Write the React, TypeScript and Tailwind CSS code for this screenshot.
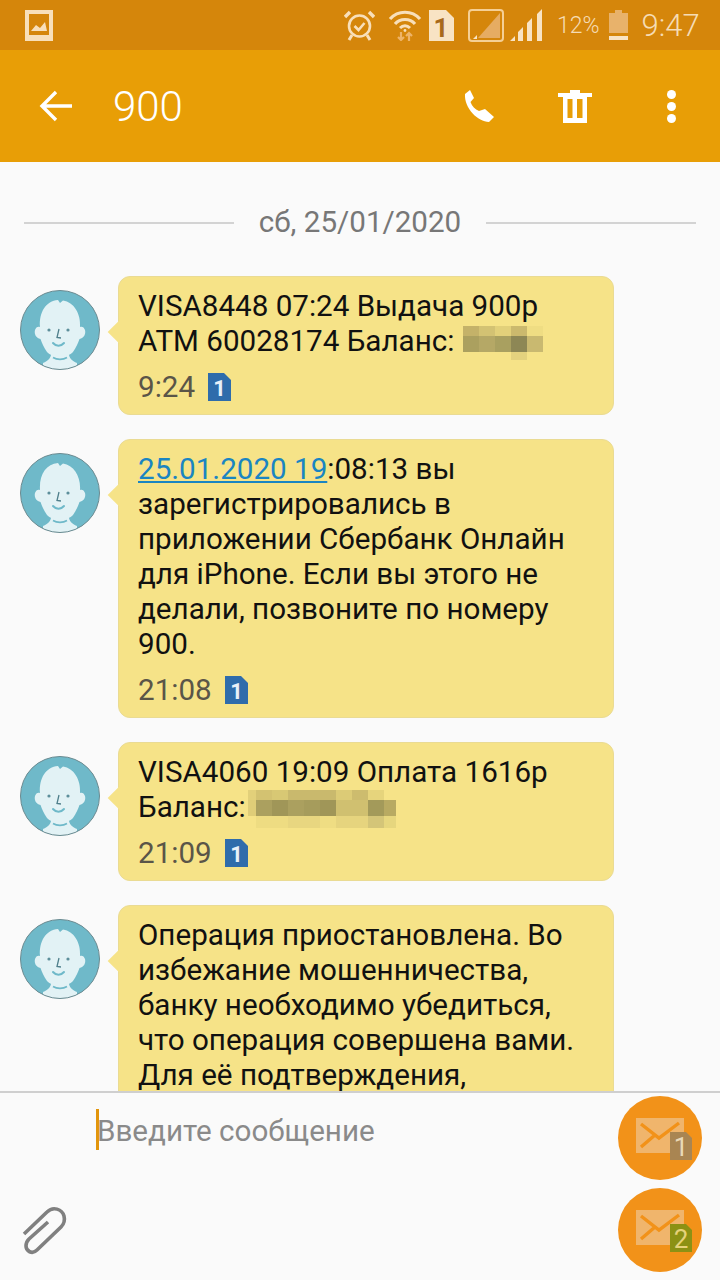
const firstCensor = {
  widths: [16, 16, 16, 16, 16],
  rows: [
    [10, ["#c4b269", "#d3c273", "#e2d07a", "#cbb96d", "#efdd83"]],
    [16, ["#aba05f", "#b5a866", "#a9a060", "#8d8755", "#c9b970"]],
    [8, ["", "", "", "#e4d27e", ""]],
  ],
} as const;

const secondCensor = {
  widths: [8, 16, 16, 16, 16, 16, 16, 16, 16, 12],
  rows: [
    [10, ["#e2d07a", "#d3c271", "#d8c874", "#c9b96d", "#c9b96d", "#c9b96d", "#dccb76", "#cdbc6e", "#e6d47c", ""]],
    [16, ["#dfcd78", "#aba05f", "#a09658", "#aba05f", "#a69c5c", "#a09658", "#d0c070", "#d0c070", "#a39a5a", "#b8aa62"]],
    [12, ["", "#eedc82", "#eedc82", "#e8d680", "#e8d680", "#efdd83", "#e6d47e", "#e6d47e", "#d4c578", "#e6d67e"]],
  ],
} as const;

function Censor({ data, top, left }: { data: typeof firstCensor | typeof secondCensor; top: number; left: number }) {
  return (
    <span className="relative inline-block h-0 w-0">
      <span className="absolute flex flex-col" style={{ top, left }}>
        {data.rows.map(([h, cells], i) => (
          <span key={i} className="flex">
            {cells.map((c, j) => (
              <span key={j} className="block shrink-0" style={{ width: data.widths[j], height: h, background: c || "transparent" }} />
            ))}
          </span>
        ))}
      </span>
    </span>
  );
}

function Avatar() {
  return (
    <svg width="80" height="80" viewBox="0 0 80 80" className="shrink-0">
      <defs>
        <clipPath id="circle">
          <circle cx="40" cy="40" r="39.5" />
        </clipPath>
      </defs>
      <circle cx="40" cy="40" r="39.5" fill="#6fb9c9" />
      <g clipPath="url(#circle)">
        <path d="M23 80 L23 73 C28 71 31 68 31 64 L49 64 C49 68 52 71 57 73 L57 80 Z" fill="#e2f2f5" />
        <path d="M27 62 C24 58 22 53 20.5 49 C16 48 14 44 15 40 C16 37 18 36 20 37 C19 22 26 11 38 10 L40 13 L43 10.5 C54 12 61 24 60 37 C62 36 64 37 65 40 C66 44 64 48 59.5 49 C58 53 56 58 53 62 C48 68 32 68 27 62 Z" fill="#e2f2f5" />
        <path d="M33 67.5 C37 70 43 70 47 67.5" stroke="#6fb9c9" strokeWidth="1.6" fill="none" />
        <path d="M33 53 C36 56.5 41 56.5 44 53" stroke="#6fb9c9" strokeWidth="2" fill="none" strokeLinecap="round" />
        <path d="M39 39 L37 47.5 L41 48" stroke="#4f7f8b" strokeWidth="1.3" fill="none" />
        <circle cx="29" cy="40" r="1.6" fill="#5d8f9b" />
        <circle cx="48" cy="40" r="1.6" fill="#5d8f9b" />
      </g>
      <circle cx="40" cy="40" r="39.5" fill="none" stroke="#6b8a90" strokeWidth="1" />
    </svg>
  );
}

function SimTag() {
  return (
    <svg width="24" height="28" viewBox="0 0 24 28" className="shrink-0">
      <path d="M1 0 H17 L24 7 V28 H1 Z" fill="#2f6cab" />
      <text x="12.5" y="23" textAnchor="middle" fontFamily="Roboto, sans-serif" fontWeight="700" fontSize="22" fill="#e8f0f8">1</text>
    </svg>
  );
}

function Message({ time, children }: { time?: string; children: React.ReactNode }) {
  return (
    <div className="flex items-start pl-[20px]">
      <div className="pt-[14px]">
        <Avatar />
      </div>
      <div className="relative ml-[18px] w-[496px] rounded-[12px] border border-[#eadb93] bg-[#f6e388] pb-[11px] pl-[19px] pr-[24px] pt-[12px]">
        <div className="absolute left-[-8px] top-[47px] h-[16px] w-[16px] rotate-45 bg-[#f6e388]" />
        <div className="relative whitespace-pre-line text-[29.6px] leading-[35px] text-[#111111]">{children}</div>
        {time && (
          <div className="relative mt-[12px] flex h-[32px] items-center gap-[12px] text-[29.6px] text-[#5a5548]">
            <span>{time}</span>
            <SimTag />
          </div>
        )}
      </div>
    </div>
  );
}

function MailButton({ color, textColor, n }: { color: string; textColor: string; n: string }) {
  return (
    <div className="flex h-[84px] w-[84px] items-center justify-center rounded-full bg-[#f29219]">
      <svg width="84" height="84" viewBox="0 0 84 84">
        <rect x="18" y="22" width="48" height="35" fill="#f0b56c" />
        <path d="M23 28 L41 42 L61 27 M23 51 L37 39" stroke="#f29219" strokeWidth="3.4" fill="none" />
        <path d="M52 36 H68 L74 42 V64 H52 Z" fill={color} />
        <text x="63" y="60" textAnchor="middle" fontFamily="Roboto, sans-serif" fontSize="26" fill={textColor}>{n}</text>
      </svg>
    </div>
  );
}

export default function App() {
  return (
    <div className="flex h-[1280px] w-[720px] flex-col overflow-hidden bg-[#fafafa] font-['Roboto',sans-serif]">
      {/* status bar */}
      <div className="flex h-[50px] shrink-0 items-center bg-[#d5860b] pl-[25px] text-[#f9e3c0]">
        <svg width="28" height="31" viewBox="0 0 28 31" className="shrink-0">
          <rect width="28" height="31" fill="#f8dfba" />
          <rect x="4" y="4" width="20" height="21" fill="#d5860b" />
          <path d="M6 21 L11 15 L15 18 L20 12 L22 21 Z" fill="#f8dfba" />
        </svg>
        <svg width="31" height="31" viewBox="0 0 31 31" fill="none" className="ml-[291px] shrink-0">
          <circle cx="15.5" cy="16" r="10.5" stroke="#f8dfba" strokeWidth="2.6" />
          <path d="M10.5 16 L14.5 20 L20.5 13" stroke="#f8dfba" strokeWidth="2.6" />
          <path d="M1 7 L6 2 M30 7 L25 2" stroke="#f8dfba" strokeWidth="3.4" />
          <path d="M8 25 L5 30 M23 25 L26 30" stroke="#f8dfba" strokeWidth="3" />
        </svg>
        <svg width="34" height="32" viewBox="0 0 34 32" fill="none" className="ml-[13px] shrink-0">
          <path d="M2 10 C10 1 24 1 32 10" stroke="#f8dfba" strokeWidth="3.2" />
          <path d="M7 15 C12 9 22 9 27 15" stroke="#f8dfba" strokeWidth="3.2" />
          <path d="M12 19 C15 16 19 16 22 19" stroke="#f8dfba" strokeWidth="3" />
          <circle cx="17" cy="21.5" r="1.4" fill="#f8dfba" />
          <path d="M13 23 V31 M10 28 L13 31 L16 28" stroke="#eeb469" strokeWidth="2.2" />
          <path d="M21 32 V24 M18 27 L21 24 L24 27" stroke="#eeb469" strokeWidth="2.2" />
        </svg>
        <svg width="25" height="31" viewBox="0 0 25 31" className="ml-[7px] shrink-0">
          <path d="M0 0 H17 L25 8 V31 H0 Z" fill="#f8e3c4" />
          <text x="12" y="27" textAnchor="middle" fontFamily="Roboto, sans-serif" fontWeight="700" fontSize="26" fill="#a8691a">1</text>
        </svg>
        <svg width="36" height="33" viewBox="0 0 36 33" fill="none" className="ml-[14px] shrink-0">
          <rect x="1" y="1" width="34" height="31" rx="3" stroke="#f5cf95" strokeWidth="2" />
          <path d="M32 4 V29 H10 Z" fill="#e6ac62" />
          <path d="M5 30 L9 26 V30 Z" fill="#f8e3c4" />
        </svg>
        <svg width="33" height="32" viewBox="0 0 33 32" className="ml-[6px] shrink-0">
          <path d="M0 32 L5 27 V32 Z M8 32 V23 L13 18 V32 Z M17 32 V14 L22 9 V32 Z M27 32 V5 L32 0 V32 Z" fill="#f8e3c4" />
        </svg>
        <span className="ml-[14px] text-[23px] font-light leading-none text-[#f5dcb5]">12%</span>
        <svg width="19" height="30" viewBox="0 0 19 30" className="ml-[9px] shrink-0">
          <rect x="6" y="0" width="7" height="3" fill="#e8b26b" />
          <rect x="0" y="3" width="19" height="20" fill="#e8b26b" />
          <rect x="0" y="26" width="19" height="4" fill="#f8e3c4" />
        </svg>
        <span className="ml-[14px] text-[31px] font-light leading-none text-[#f5dcb5]">9:47</span>
      </div>

      {/* toolbar */}
      <div className="flex h-[112px] shrink-0 items-center bg-[#e89e06] text-white">
        <svg width="34" height="32" viewBox="0 0 34 32" fill="none" className="ml-[39px] shrink-0">
          <path d="M33 16 H3 M17 2 L3 16 L17 30" stroke="#fff" strokeWidth="3.4" />
        </svg>
        <span className="ml-[40px] pt-[2px] text-[42px] font-light leading-none">900</span>
        <svg width="31" height="33" viewBox="0 0 31 33" className="ml-[281px] shrink-0">
          <path d="M1 4 L6 0 L10 8 L6.5 12 C8 16 11 19.5 15 21 L21 19 L30 27 L25 32 C14 32 0 18 1 4 Z" fill="#fff" />
        </svg>
        <svg width="34" height="33" viewBox="0 0 34 33" className="ml-[63px] shrink-0">
          <path d="M12 0 H22 V3 H34 V7 H0 V3 H12 Z M5 7 H29 V33 H5 Z" fill="#fff" />
          <rect x="9.5" y="9" width="5" height="19" fill="#e89e06" />
          <rect x="19" y="9" width="5.5" height="19" fill="#e89e06" />
        </svg>
        <div className="ml-[75px] flex flex-col gap-[3px]">
          <span className="h-[9px] w-[9px] rounded-full bg-white" />
          <span className="h-[9px] w-[9px] rounded-full bg-white" />
          <span className="h-[9px] w-[9px] rounded-full bg-white" />
        </div>
      </div>

      {/* messages */}
      <div className="flex min-h-0 flex-1 flex-col overflow-hidden">
        <div className="flex h-[114px] shrink-0 items-center gap-[25px] px-[24px] pt-[8px]">
          <div className="h-[2px] flex-1 bg-[#d3d3d3]" />
          <span className="text-[29.6px] leading-none text-[#777777]">сб, 25/01/2020</span>
          <div className="h-[2px] flex-1 bg-[#d3d3d3]" />
        </div>
        <div className="flex flex-col gap-[24px]">
          <Message time="9:24">
            VISA8448 07:24 Выдача 900р{"\n"}ATM 60028174 Баланс: <Censor data={firstCensor} top={-25} left={1} />
          </Message>
          <Message time="21:08">
            <span className="text-[#1a85c2] underline">25.01.2020 19</span>:08:13 вы зарегистрировались в приложении Сбербанк Онлайн для iPhone. Если вы этого не делали, позвоните по номеру 900.
          </Message>
          <Message time="21:09">
            VISA4060 19:09 Оплата 1616р{"\n"}Баланс: <Censor data={secondCensor} top={-27} left={-5} />
          </Message>
          <Message>
            Операция приостановлена. Во избежание мошенничества, банку необходимо убедиться, что операция совершена вами. Для её подтверждения, сообщите код.
          </Message>
        </div>
      </div>

      {/* composer */}
      <div className="flex h-[189px] shrink-0 border-t-2 border-[#cfcfcf] bg-[#fafafa]">
        <div className="flex w-[96px] shrink-0 items-end pb-[20px] pl-[15px]">
          <svg width="60" height="60" viewBox="0 0 60 60" fill="none">
            <path d="M9 34 L32 12 C38 6 47 9 49 16 C50 20 49 24 46 27 L22 50 C17 55 11 51 11 46 C11 43 12 41 14 39 L33 22" stroke="#808080" strokeWidth="3.6" />
          </svg>
        </div>
        <div className="flex-1 pt-[16px]">
          <div className="flex h-[41px] items-center">
            <span className="h-[41px] w-[3px] shrink-0 bg-[#e2950b]" />
            <span className="-ml-[2px] pt-[3px] text-[29.6px] text-[#8a8a8a]">Введите сообщение</span>
          </div>
        </div>
        <div className="flex w-[102px] shrink-0 flex-col gap-[8px] pt-[3px]">
          <MailButton color="#a98552" textColor="#e9d9b8" n="1" />
          <MailButton color="#8c9114" textColor="#e6d27a" n="2" />
        </div>
      </div>
    </div>
  );
}
